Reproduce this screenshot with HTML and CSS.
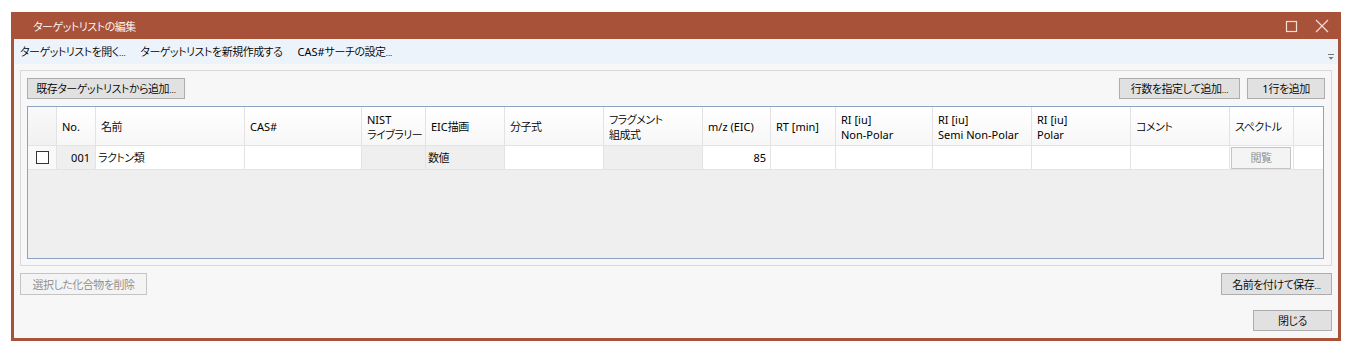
FILE: index.html
```html
<!DOCTYPE html>
<html lang="ja">
<head>
<meta charset="utf-8">
<title>ターゲットリストの編集</title>
<link rel="stylesheet" href="styles.css">
</head>
<body>
<div class="window">
  <div class="titlebar">
    <span class="title jp">ターゲットリストの編集</span>
    <div class="caption-btns">
      <svg class="cap-icon" width="13" height="13" viewBox="0 0 13 13"><rect x="1.5" y="1.5" width="10" height="10" fill="none" stroke="#f3ddd6" stroke-width="1.2"/></svg>
      <svg class="cap-icon" width="14" height="14" viewBox="0 0 14 14"><path d="M1 1 L13 13 M13 1 L1 13" stroke="#f3ddd6" stroke-width="1.2" fill="none"/></svg>
    </div>
  </div>
  <div class="client">
    <div class="menubar">
      <span class="menu-item jp">ターゲットリストを開く...</span>
      <span class="menu-item jp">ターゲットリストを新規作成する</span>
      <span class="menu-item"><span class="lt">CAS#</span><span class="jp">サーチの設定...</span></span>
      <svg class="overflow" width="8" height="8" viewBox="0 0 8 8"><path d="M1 1.5 H7" stroke="#777" stroke-width="1"/><path d="M1.5 4 H6.5 L4 6.8 Z" fill="#777"/></svg>
    </div>
    <div class="panel">
      <div class="panel-tools">
        <button class="btn jp btn-add-existing">既存ターゲットリストから追加...</button>
        <div class="tools-right">
          <button class="btn jp btn-add-n">行数を指定して追加...</button>
          <button class="btn btn-add-1"><span class="lt">1</span><span class="jp">行を追加</span></button>
        </div>
      </div>
      <div class="grid">
        <div class="hd hd-check"></div>
        <div class="hd"><span>No.</span></div>
        <div class="hd"><span class="jp">名前</span></div>
        <div class="hd"><span>CAS#</span></div>
        <div class="hd"><span>NIST<br><span class="jp">ライブラリー</span></span></div>
        <div class="hd"><span>EIC<span class="jp">描画</span></span></div>
        <div class="hd"><span class="jp">分子式</span></div>
        <div class="hd"><span class="jp">フラグメント<br>組成式</span></div>
        <div class="hd"><span>m/z (EIC)</span></div>
        <div class="hd"><span>RT [min]</span></div>
        <div class="hd"><span>RI [iu]<br>Non-Polar</span></div>
        <div class="hd"><span>RI [iu]<br>Semi Non-Polar</span></div>
        <div class="hd"><span>RI [iu]<br>Polar</span></div>
        <div class="hd"><span class="jp">コメント</span></div>
        <div class="hd"><span class="jp">スペクトル</span></div>
        <div class="hd hd-fill"></div>

        <div class="cell cell-check"><span class="checkbox"></span></div>
        <div class="cell ro num">001</div>
        <div class="cell jp">ラクトン類</div>
        <div class="cell"></div>
        <div class="cell ro"></div>
        <div class="cell ro jp">数値</div>
        <div class="cell"></div>
        <div class="cell ro"></div>
        <div class="cell num mz">85</div>
        <div class="cell"></div>
        <div class="cell"></div>
        <div class="cell"></div>
        <div class="cell"></div>
        <div class="cell"></div>
        <div class="cell cell-btn"><button class="btn jp disabled btn-view">閲覧</button></div>
        <div class="cell cell-fill"></div>

        <div class="grid-empty"></div>
      </div>
    </div>
    <div class="bottom-row">
      <button class="btn jp disabled btn-delete">選択した化合物を削除</button>
      <button class="btn jp btn-save">名前を付けて保存...</button>
    </div>
    <div class="close-row">
      <button class="btn jp btn-close">閉じる</button>
    </div>
  </div>
</div>
</body>
</html>
```

FILE: styles.css
```css
* { box-sizing: border-box; }
html, body { margin: 0; padding: 0; background: #ffffff; }
body {
  font-family: "Noto Sans", "Noto Sans CJK JP", sans-serif;
  font-size: 11px;
  font-weight: 400;
  font-feature-settings: "palt";
  color: #000;
}
.jp { letter-spacing: -0.5px; font-weight: 350; }
.lt { letter-spacing: 0; font-weight: 400; }
.window {
  margin: 12px 0 0 11px;
  width: 1330px;
  height: 329px;
  background: #a9523a;
  display: flex;
  flex-direction: column;
  padding: 0 3px 3px 3px;
}
.titlebar {
  height: 27px;
  display: flex;
  align-items: center;
  justify-content: space-between;
  padding: 2px 9px 0 19px;
}
.title { color: #fff; line-height: 15px; }
.caption-btns { display: flex; gap: 17px; align-items: center; margin-top: -1px; }
.cap-icon { display: block; }
.client {
  flex: 1;
  background: #f7f7f7;
  display: flex;
  flex-direction: column;
}
.menubar {
  height: 25px;
  background: #edf3fb;
  display: flex;
  align-items: center;
  padding-left: 6px;
  gap: 15px;
  position: relative;
}
.menu-item { line-height: 15px; white-space: nowrap; }
.overflow { position: absolute; right: 3px; top: 14px; }
.panel {
  margin: 6px 6px 0 6px;
  border: 1px solid #d9d9d9;
  background: #f7f7f7;
  padding: 7px 7px 6px 6px;
  display: flex;
  flex-direction: column;
  gap: 7px;
}
.panel-tools { display: flex; justify-content: space-between; height: 21px; }
.tools-right { display: flex; gap: 7px; margin-right: -1px; }
.btn {
  font-family: inherit;
  font-feature-settings: "palt";
  font-size: 11px;
  line-height: 15px;
  white-space: nowrap;
  color: #000;
  background: #e1e1e1;
  border: 1px solid #adadad;
  padding: 0;
  margin: 0;
  height: 21px;
  display: flex;
  align-items: center;
  justify-content: center;
}
.btn.disabled { background: #f4f4f4; border-color: #c4c4c4; color: #8a8a8a; }
.btn-add-existing { width: 158px; }
.btn-add-n { width: 121px; }
.btn-add-1 { width: 78px; }
.grid {
  height: 153px;
  border: 1px solid #8ea2c2;
  background: #efefef;
  display: grid;
  grid-template-columns: 29px 39px 149px 117px 64px 79px 99px 99px 68px 65px 97px 99px 99px 99px 64px 1fr;
  grid-template-rows: 39px 24px 1fr;
}
.hd {
  background: linear-gradient(#ffffff, #f7f7f7);
  border-right: 1px solid #e3e3e3;
  border-bottom: 1px solid #e3e3e3;
  display: flex;
  align-items: center;
  padding: 1px 5px 0 5px;
  line-height: 15px;
  white-space: nowrap;
}
.hd-check { background: linear-gradient(#f9f9f9, #f1f1f1); }
.hd-fill { border-right: none; }
.cell {
  background: #ffffff;
  border-right: 1px solid #e3e3e3;
  border-bottom: 1px solid #e3e3e3;
  display: flex;
  align-items: center;
  padding: 0 2px;
  line-height: 15px;
  white-space: nowrap;
}
.cell.ro { background: #efefef; }
.cell.num { justify-content: flex-end; padding-right: 5px; }
.cell.mz { padding-right: 4px; }
.cell-check { background: #f9f9f9; justify-content: center; padding: 0; }
.checkbox { width: 13px; height: 13px; border: 1px solid #333; background: #fff; display: block; }
.cell-fill { border-right: none; }
.cell-btn { padding: 0 2px 0 1px; }
.btn-view { width: 60px; height: 22px; }
.grid-empty { grid-column: 1 / -1; background: #efefef; }
.bottom-row {
  display: flex;
  justify-content: space-between;
  padding: 0 6px;
  margin-top: 7px;
}
.btn-delete { width: 127px; height: 22px; }
.btn-save { width: 111px; height: 22px; }
.close-row {
  display: flex;
  justify-content: flex-end;
  padding: 0 6px;
  margin-top: 15px;
}
.btn-close { width: 79px; }
```
